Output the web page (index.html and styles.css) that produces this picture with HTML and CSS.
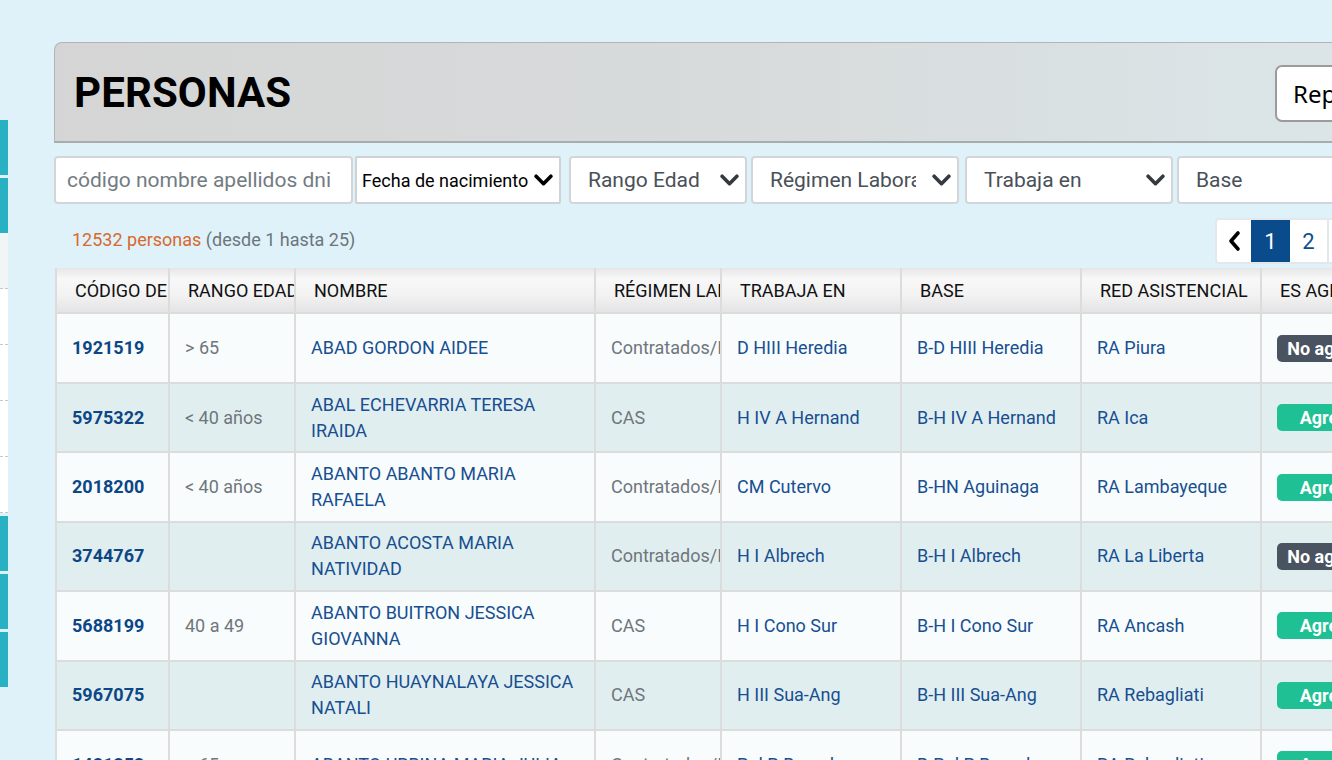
FILE: index.html
```html
<!DOCTYPE html>
<html lang="es">
<head>
<meta charset="utf-8">
<title>Personas</title>
<link rel="stylesheet" href="styles.css">
</head>
<body>
<div class="page">
  <aside class="rail">
    <div class="rail-block"></div>
    <div class="rail-block"></div>
    <div class="rail-list">
      <div class="rail-item rail-item-first"></div>
      <div class="rail-item"></div>
      <div class="rail-item"></div>
      <div class="rail-item"></div>
      <div class="rail-item"></div>
    </div>
    <div class="rail-block"></div>
    <div class="rail-block"></div>
    <div class="rail-block"></div>
  </aside>

  <main class="content">
    <header class="panel-head">
      <h1 class="title">PERSONAS</h1>
      <button class="btn-report">Reportes</button>
    </header>

    <div class="filters">
      <div class="field field-search"><span class="placeholder">código nombre apellidos dni</span></div>
      <div class="field field-date"><span class="date-label">Fecha de nacimiento</span>
        <svg class="chev chev-black" viewBox="0 0 18 12"><polyline points="2,2 9,9 16,2"/></svg></div>
      <div class="field field-sel field-rango"><span class="sel-label">Rango Edad</span>
        <svg class="chev" viewBox="0 0 18 12"><polyline points="2,2 9,9 16,2"/></svg></div>
      <div class="field field-sel field-regimen"><span class="sel-label">Régimen Laboral</span>
        <svg class="chev" viewBox="0 0 18 12"><polyline points="2,2 9,9 16,2"/></svg></div>
      <div class="field field-sel field-trabaja"><span class="sel-label">Trabaja en</span>
        <svg class="chev" viewBox="0 0 18 12"><polyline points="2,2 9,9 16,2"/></svg></div>
      <div class="field field-sel field-base"><span class="sel-label">Base</span>
        <svg class="chev" viewBox="0 0 18 12"><polyline points="2,2 9,9 16,2"/></svg></div>
    </div>

    <div class="meta-row">
      <div class="count"><span class="count-num">12532 personas</span> (desde 1 hasta 25)</div>
      <nav class="pager">
        <span class="pg pg-prev"><svg viewBox="0 0 14 22"><polyline points="11,3 4,11 11,19"/></svg></span>
        <span class="pg pg-active">1</span>
        <span class="pg">2</span>
        <span class="pg">3</span>
        <span class="pg">4</span>
      </nav>
    </div>

    <table class="grid">
      <colgroup>
        <col class="c-code"><col class="c-rango"><col class="c-nombre"><col class="c-reg">
        <col class="c-wide"><col class="c-wide"><col class="c-wide"><col class="c-wide">
      </colgroup>
      <thead>
        <tr>
          <th>CÓDIGO DE TRABAJADOR</th>
          <th>RANGO EDAD</th>
          <th>NOMBRE</th>
          <th>RÉGIMEN LABORAL</th>
          <th>TRABAJA EN</th>
          <th>BASE</th>
          <th>RED ASISTENCIAL</th>
          <th>ES AGREGADO</th>
        </tr>
      </thead>
      <tbody>
        <tr>
          <td class="code">1921519</td><td class="muted">&gt; 65</td><td class="name">ABAD GORDON AIDEE</td>
          <td class="muted">Contratados/Independientes</td><td class="link">D HIII Heredia</td><td class="link">B-D HIII Heredia</td>
          <td class="link">RA Piura</td><td><span class="badge badge-no">No agregado</span></td>
        </tr>
        <tr>
          <td class="code">5975322</td><td class="muted">&lt; 40 años</td><td class="name">ABAL ECHEVARRIA TERESA IRAIDA</td>
          <td class="muted">CAS</td><td class="link">H IV A Hernand</td><td class="link">B-H IV A Hernand</td>
          <td class="link">RA Ica</td><td><span class="badge badge-yes">Agregado</span></td>
        </tr>
        <tr>
          <td class="code">2018200</td><td class="muted">&lt; 40 años</td><td class="name">ABANTO ABANTO MARIA RAFAELA</td>
          <td class="muted">Contratados/Independientes</td><td class="link">CM Cutervo</td><td class="link">B-HN Aguinaga</td>
          <td class="link">RA Lambayeque</td><td><span class="badge badge-yes">Agregado</span></td>
        </tr>
        <tr>
          <td class="code">3744767</td><td class="muted"></td><td class="name">ABANTO ACOSTA MARIA NATIVIDAD</td>
          <td class="muted">Contratados/Independientes</td><td class="link">H I Albrech</td><td class="link">B-H I Albrech</td>
          <td class="link">RA La Liberta</td><td><span class="badge badge-no">No agregado</span></td>
        </tr>
        <tr>
          <td class="code">5688199</td><td class="muted">40 a 49</td><td class="name">ABANTO BUITRON JESSICA GIOVANNA</td>
          <td class="muted">CAS</td><td class="link">H I Cono Sur</td><td class="link">B-H I Cono Sur</td>
          <td class="link">RA Ancash</td><td><span class="badge badge-yes">Agregado</span></td>
        </tr>
        <tr>
          <td class="code">5967075</td><td class="muted"></td><td class="name">ABANTO HUAYNALAYA JESSICA NATALI</td>
          <td class="muted">CAS</td><td class="link">H III Sua-Ang</td><td class="link">B-H III Sua-Ang</td>
          <td class="link">RA Rebagliati</td><td><span class="badge badge-yes">Agregado</span></td>
        </tr>
        <tr>
          <td class="code">1481853</td><td class="muted">&gt; 65</td><td class="name">ABANTO URBINA MARIA JULIA</td>
          <td class="muted">Contratados/Independientes</td><td class="link">Pol P Bernal</td><td class="link">B-Pol P Bernal</td>
          <td class="link">RA Rebagliati</td><td><span class="badge badge-yes">Agregado</span></td>
        </tr>
      </tbody>
    </table>
  </main>
</div>
</body>
</html>
```
FILE: styles.css
```css
html, body {
  margin: 0;
  padding: 0;
}
body {
  background: #dff2f9;
  font-family: Roboto, "Liberation Sans", Arial, sans-serif;
  width: 1332px;
  height: 760px;
  overflow: hidden;
}
.page {
  display: flex;
  align-items: flex-start;
  width: 1600px;
}

/* left rail */
.rail {
  width: 8px;
  flex: 0 0 8px;
  padding-top: 120px;
  display: flex;
  flex-direction: column;
}
.rail-block {
  height: 55px;
  background: #27b1c3;
  margin-bottom: 3px;
}
.rail-list {
  background: #ffffff;
  margin-top: -3px;
  margin-bottom: 3px;
}
.rail-item {
  height: 55px;
  border-bottom: 1px dashed #c8c8c8;
}
.rail-item-first {
  background: #f1f5f6;
}

/* main */
.content {
  margin-left: 46px;
  padding-top: 42px;
  width: 1420px;
  flex: 0 0 1420px;
}
.panel-head {
  height: 98px;
  box-sizing: content-box;
  border-top: 1px solid #b4b4b4;
  border-left: 1px solid #b4b4b4;
  border-bottom: 2px solid #a9acad;
  border-top-left-radius: 8px;
  background: linear-gradient(90deg, #d5d5d5 0%, #d8dcdd 55%, #dce8ec 100%);
  display: flex;
  align-items: center;
  padding: 0 0 0 19px;
}
.title {
  margin: 0;
  font-size: 42px;
  font-weight: 700;
  color: #000;
  letter-spacing: 0.1px;
  flex: 0 0 1201px;
}
.btn-report {
  height: 57px;
  width: 140px;
  border: 2px solid #9b9b9b;
  border-radius: 7px;
  background: #fff;
  font-family: "Noto Sans", "Liberation Sans", sans-serif;
  font-size: 24px;
  color: #000;
  text-align: left;
  padding: 0 0 0 16px;
  margin-top: 2px;
}

/* filters */
.filters {
  display: flex;
  margin-top: 13px;
  height: 48px;
}
.field {
  height: 48px;
  box-sizing: border-box;
  background: #fff;
  border: 2px solid #d3d6d8;
  border-radius: 4px;
  display: flex;
  align-items: center;
  position: relative;
  overflow: hidden;
}
.field-search {
  width: 299px;
  padding-left: 11px;
}
.placeholder {
  font-size: 21px;
  color: #737b82;
  white-space: nowrap;
}
.field-date {
  width: 206px;
  margin-left: 2px;
  border-radius: 2px;
  padding-left: 5px;
  border-color: #cfd2d4;
}
.date-label {
  font-size: 18px;
  color: #000;
  white-space: nowrap;
}
.field-sel {
  padding-left: 17px;
}
.sel-label {
  font-size: 21px;
  color: #495057;
  white-space: nowrap;
  overflow: hidden;
  flex: 1 1 auto;
}
.field-rango { width: 178px; margin-left: 8px; }
.field-regimen { width: 208px; margin-left: 4px; }
.field-trabaja { width: 208px; margin-left: 6px; }
.field-base { width: 209px; margin-left: 4px; }
.field-regimen .sel-label { flex: 0 0 146px; }
.chev {
  width: 19px;
  height: 13px;
  flex: 0 0 19px;
  margin: 0 6px 0 auto;
  fill: none;
  stroke: #343a40;
  stroke-width: 3.4;
  stroke-linecap: round;
  stroke-linejoin: round;
}
.chev-black {
  stroke: #000;
  margin-right: 6px;
}

/* meta */
.meta-row {
  display: flex;
  align-items: flex-start;
  height: 64px;
}
.count {
  flex: 0 0 1143px;
  padding-left: 18px;
  padding-top: 25px;
  font-size: 18px;
  color: #6c757d;
  white-space: nowrap;
}
.count-num {
  color: #d7692f;
}
.pager {
  display: flex;
  margin-top: 14px;
  height: 46px;
  box-sizing: border-box;
  border: 2px solid #e5e8ea;
  border-radius: 4px;
  background: #fff;
}
.pg {
  width: 39px;
  height: 42px;
  display: flex;
  align-items: center;
  justify-content: center;
  font-size: 22px;
  color: #0b4e8f;
  border-right: 2px solid #e5e8ea;
  box-sizing: border-box;
}
.pg-prev {
  width: 34px;
  border-right: none;
}
.pg-prev svg {
  width: 14px;
  height: 22px;
  fill: none;
  stroke: #000;
  stroke-width: 3.6;
  stroke-linecap: round;
  stroke-linejoin: round;
}
.pg-active {
  background: #0a4b8c;
  color: #fff;
  border-right: none;
}

/* table */
.grid {
  margin-left: 1px;
  border-collapse: collapse;
  table-layout: fixed;
  width: 1385px;
  border-left: 1px solid #fff;
}
.c-code { width: 113px; }
.c-rango { width: 126px; }
.c-nombre { width: 300px; }
.c-reg { width: 126px; }
.c-wide { width: 180px; }
.grid th {
  height: 44px;
  padding: 0 0 0 18px;
  text-align: left;
  font-weight: 400;
  font-size: 18px;
  color: #111;
  white-space: nowrap;
  overflow: hidden;
  border: 2px solid #dcdcdc;
  border-top: none;
  background: linear-gradient(180deg, #e6e6e6 0%, #f8f8f8 25%, #f3f3f3 60%, #e4e4e4 100%);
}
.grid td {
  height: 67.4px;
  padding: 0 15px;
  font-size: 18px;
  line-height: 26px;
  border: 2px solid #dcdcdc;
  white-space: nowrap;
  overflow: hidden;
  vertical-align: middle;
}
.grid tbody tr:first-child td { height: 68px; }
.grid tbody tr:nth-child(odd) td { background: #f8fcfd; }
.grid tbody tr:nth-child(even) td { background: #e1eef0; }
.grid td.name {
  white-space: normal;
  color: #174f91;
}
.code {
  font-weight: 700;
  color: #0c4685;
}
.muted {
  color: #6f767c;
}
.link {
  color: #174f91;
}
.badge {
  display: inline-block;
  width: 124px;
  height: 27px;
  line-height: 27px;
  border-radius: 5px;
  text-align: center;
  color: #fff;
  font-weight: 700;
  font-size: 18px;
}
.badge-no { background: #4a5360; }
.badge-yes { background: #1fc194; }
```
